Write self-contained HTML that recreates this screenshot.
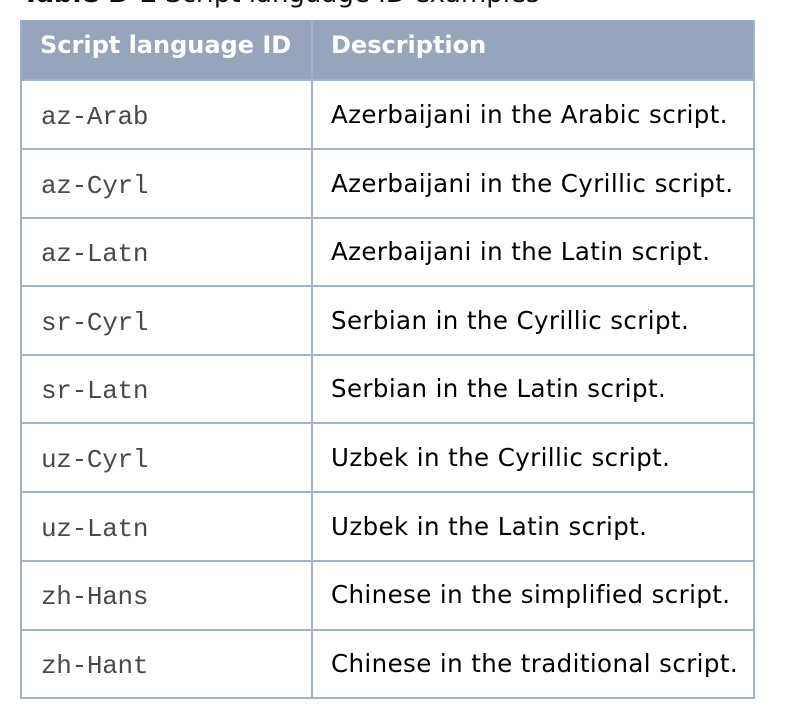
<!DOCTYPE html>
<html><head><style>
html,body{margin:0;padding:0;background:#fff;width:802px;height:718px;overflow:hidden;position:relative}
.t{position:absolute;left:22px;top:-21px;font:26px "DejaVu Sans","Liberation Sans",sans-serif;color:#111;white-space:nowrap}
.hd{position:absolute;left:21px;top:20px;width:733px;height:60px;background:#96a5bc}
.ln{position:absolute;background:#a2b2ca}
.c{position:absolute;white-space:nowrap}
.m{font:26px "Liberation Mono",monospace;color:#4a4a4a;left:41px;letter-spacing:-0.3px;margin-top:1px}
.d{font:24.5px "DejaVu Sans","Liberation Sans",sans-serif;color:#000;left:331px;letter-spacing:0.4px;margin-top:-1px}
.h{font:bold 24px "DejaVu Sans","Liberation Sans",sans-serif;color:#fff}
</style></head><body>
<div class="t"><b>Table B-1</b> Script language ID examples</div>
<div class="hd"></div>
<div class="c h" style="left:40px;top:31px">Script language ID</div>
<div class="c h" style="left:331px;top:31px">Description</div>
<div class="ln" style="left:20px;top:20px;width:2px;height:679px"></div>
<div class="ln" style="left:753px;top:20px;width:2px;height:679px"></div>
<div class="ln" style="left:311px;top:20px;width:2px;height:679px"></div>
<div class="ln" style="left:20px;top:79px;width:735px;height:2px"></div>
<div class="ln" style="left:20px;top:148px;width:735px;height:2px"></div>
<div class="ln" style="left:20px;top:217px;width:735px;height:2px"></div>
<div class="ln" style="left:20px;top:285px;width:735px;height:2px"></div>
<div class="ln" style="left:20px;top:354px;width:735px;height:2px"></div>
<div class="ln" style="left:20px;top:422px;width:735px;height:2px"></div>
<div class="ln" style="left:20px;top:491px;width:735px;height:2px"></div>
<div class="ln" style="left:20px;top:560px;width:735px;height:2px"></div>
<div class="ln" style="left:20px;top:629px;width:735px;height:2px"></div>
<div class="ln" style="left:20px;top:697px;width:735px;height:2px"></div>

<div class="c m" style="top:101px">az-Arab</div><div class="c d" style="top:101px">Azerbaijani in the Arabic script.</div>
<div class="c m" style="top:170px">az-Cyrl</div><div class="c d" style="top:170px">Azerbaijani in the Cyrillic script.</div>
<div class="c m" style="top:238px">az-Latn</div><div class="c d" style="top:238px">Azerbaijani in the Latin script.</div>
<div class="c m" style="top:307px">sr-Cyrl</div><div class="c d" style="top:307px">Serbian in the Cyrillic script.</div>
<div class="c m" style="top:375px">sr-Latn</div><div class="c d" style="top:375px">Serbian in the Latin script.</div>
<div class="c m" style="top:444px">uz-Cyrl</div><div class="c d" style="top:444px">Uzbek in the Cyrillic script.</div>
<div class="c m" style="top:513px">uz-Latn</div><div class="c d" style="top:513px">Uzbek in the Latin script.</div>
<div class="c m" style="top:581px">zh-Hans</div><div class="c d" style="top:581px">Chinese in the simplified script.</div>
<div class="c m" style="top:650px">zh-Hant</div><div class="c d" style="top:650px">Chinese in the traditional script.</div>
</body></html>
